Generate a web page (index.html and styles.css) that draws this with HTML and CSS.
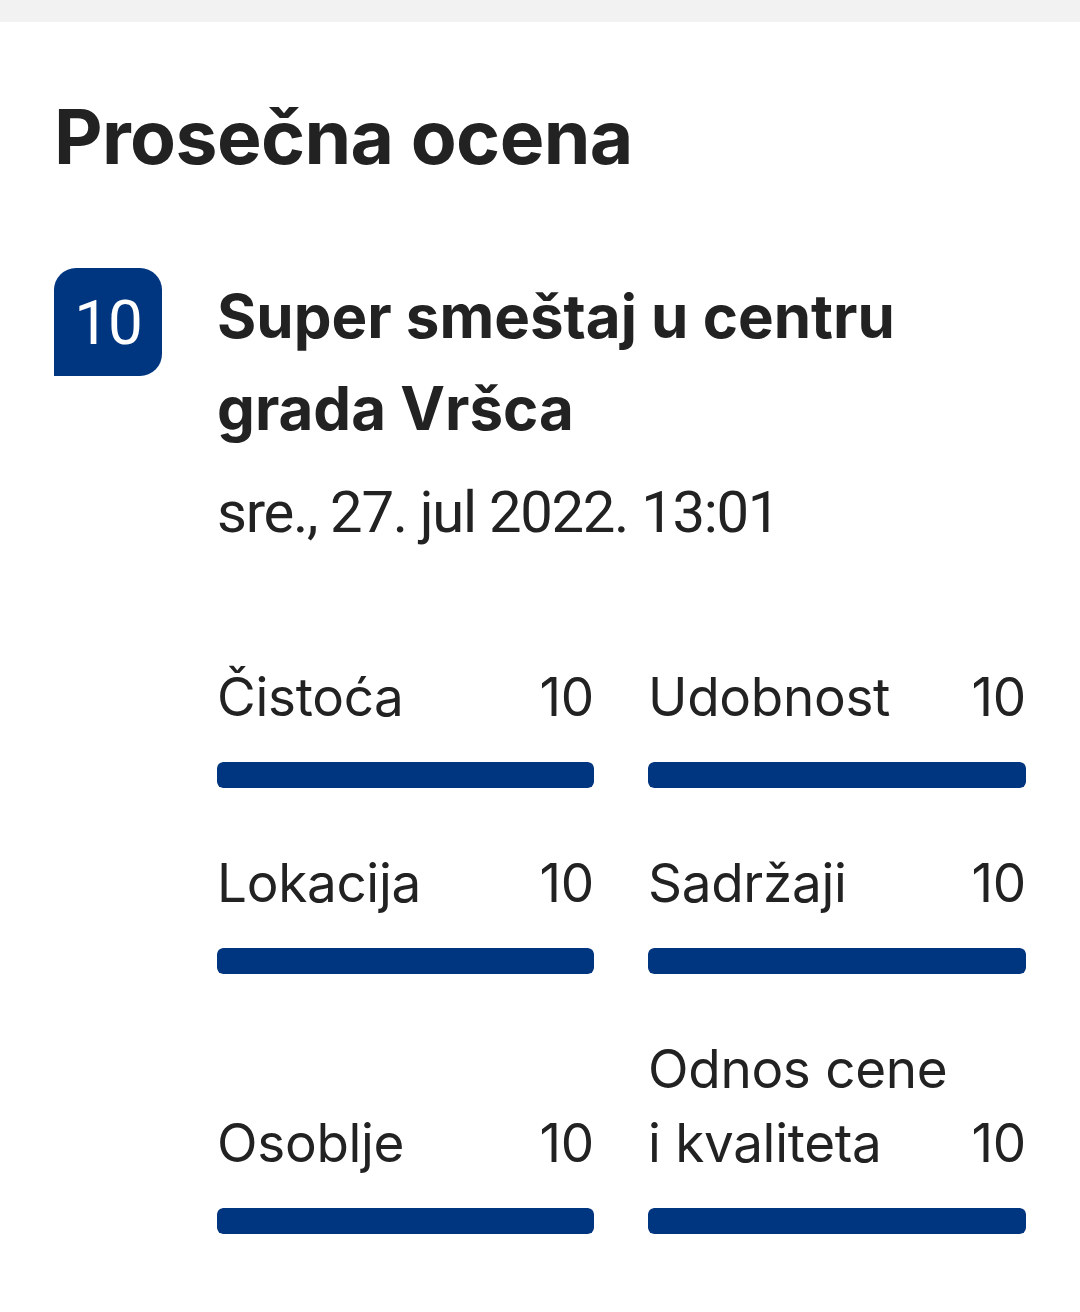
FILE: index.html
```html
<!DOCTYPE html>
<html lang="sr">
<head>
<meta charset="utf-8">
<title>Prosečna ocena</title>
<link rel="stylesheet" href="styles.css">
</head>
<body>
<div class="topbar"></div>
<main class="page">
  <h1 class="heading">Prosečna ocena</h1>
  <section class="review">
    <div class="badge">10</div>
    <div class="review-body">
      <h2 class="review-title">Super smeštaj u centru grada Vršca</h2>
      <p class="review-date">sre., 27. jul 2022. 13:01</p>
      <div class="scores">
        <div class="score">
          <div class="score-head"><span class="score-label">Čistoća</span><span class="score-value">10</span></div>
          <div class="bar"><div class="bar-fill" style="width:100%"></div></div>
        </div>
        <div class="score">
          <div class="score-head"><span class="score-label">Udobnost</span><span class="score-value">10</span></div>
          <div class="bar"><div class="bar-fill" style="width:100%"></div></div>
        </div>
        <div class="score">
          <div class="score-head"><span class="score-label">Lokacija</span><span class="score-value">10</span></div>
          <div class="bar"><div class="bar-fill" style="width:100%"></div></div>
        </div>
        <div class="score">
          <div class="score-head"><span class="score-label">Sadržaji</span><span class="score-value">10</span></div>
          <div class="bar"><div class="bar-fill" style="width:100%"></div></div>
        </div>
        <div class="score">
          <div class="score-head"><span class="score-label">Osoblje</span><span class="score-value">10</span></div>
          <div class="bar"><div class="bar-fill" style="width:100%"></div></div>
        </div>
        <div class="score">
          <div class="score-head"><span class="score-label">Odnos cene<br>i kvaliteta</span><span class="score-value">10</span></div>
          <div class="bar"><div class="bar-fill" style="width:100%"></div></div>
        </div>
      </div>
    </div>
  </section>
</main>
</body>
</html>
```

FILE: styles.css
```css
* {
  box-sizing: border-box;
}

html, body {
  margin: 0;
  padding: 0;
  background: #ffffff;
}

body {
  font-family: Inter, "Noto Sans", Roboto, sans-serif;
  color: #222222;
  width: 1080px;
  min-height: 1312px;
}

.topbar {
  height: 22px;
  background: #f2f2f2;
}

.page {
  padding: 69px 54px 0 54px;
}

.heading {
  margin: 0;
  font-size: 75px;
  line-height: 92px;
  font-weight: 700;
  letter-spacing: -0.6px;
}

.review {
  display: flex;
  align-items: flex-start;
  gap: 55px;
  margin-top: 85px;
}

.badge {
  flex: 0 0 auto;
  width: 108px;
  height: 108px;
  background: #003580;
  color: #ffffff;
  border-radius: 22px 22px 22px 0;
  display: flex;
  align-items: center;
  justify-content: center;
  font-family: Roboto, sans-serif;
  font-size: 62px;
  font-weight: 400;
  letter-spacing: -1px;
}

.review-body {
  flex: 1 1 auto;
  margin-top: 2px;
}

.review-title {
  margin: 0;
  width: 700px;
  font-size: 60px;
  line-height: 92px;
  font-weight: 700;
}

.review-date {
  margin: 18px 0 0 0;
  font-family: Roboto, sans-serif;
  font-size: 58px;
  line-height: 80px;
  font-weight: 400;
  letter-spacing: -1.3px;
}

.scores {
  display: grid;
  grid-template-columns: 377px 378px;
  column-gap: 54px;
  row-gap: 58px;
  margin-top: 108px;
}

.score {
  display: flex;
  flex-direction: column;
  justify-content: flex-end;
}

.score-head {
  display: flex;
  justify-content: space-between;
  align-items: flex-end;
  gap: 20px;
  font-size: 53px;
  line-height: 74px;
  letter-spacing: -0.3px;
}

.score-value {
  flex: 0 0 auto;
}

.bar {
  margin-top: 28px;
  height: 26px;
  border-radius: 6px;
  background: #e6e6e6;
  overflow: hidden;
}

.bar-fill {
  height: 100%;
  background: #003580;
  border-radius: 6px;
}
```
